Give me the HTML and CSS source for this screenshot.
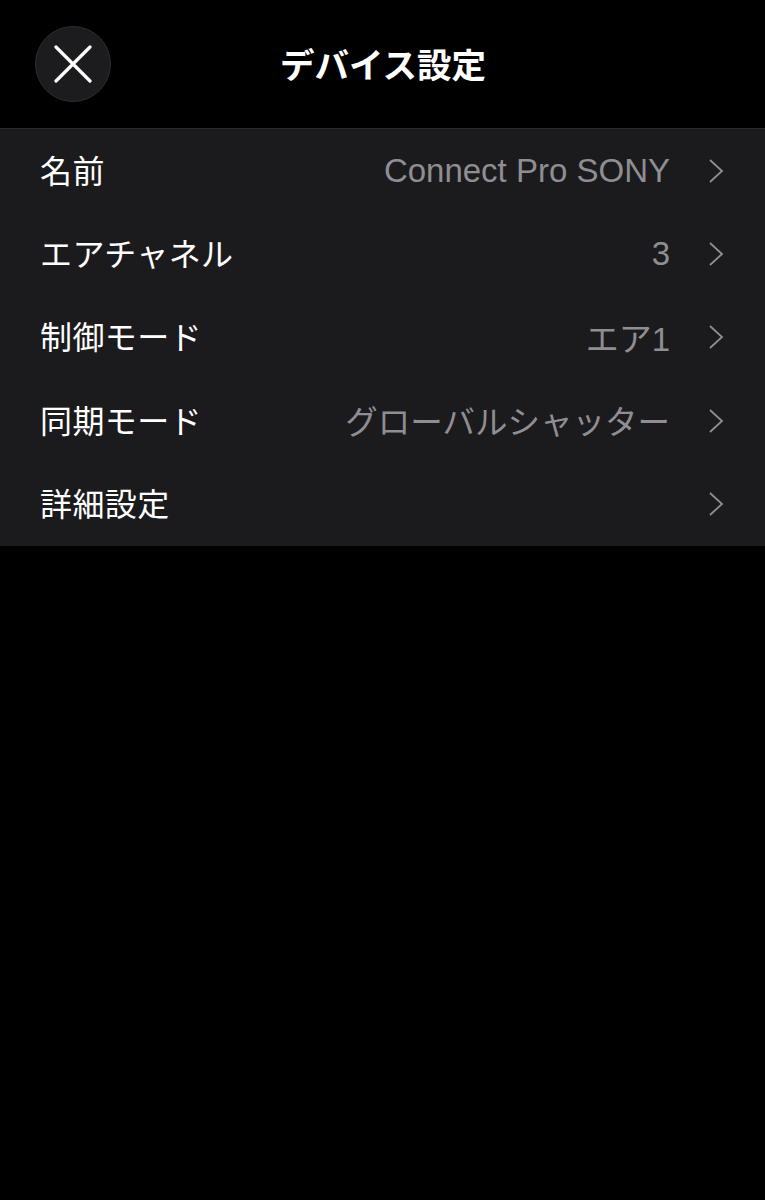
FILE: index.html
```html
<!DOCTYPE html>
<html lang="ja">
<head>
    <meta charset="UTF-8">
    <meta name="viewport" content="width=device-width, initial-scale=1.0">
    <title>デバイス設定</title>
    <link rel="stylesheet" href="styles.css">
</head>
<body>
    <div class="header">
        <button class="close">
            <svg width="38" height="38" viewBox="0 0 38 38">
                <path d="M2 2 L36 36 M36 2 L2 36" stroke="#fff" stroke-width="3.2" stroke-linecap="round" fill="none"/>
            </svg>
        </button>
        <h1 class="title">デバイス設定</h1>
    </div>

    <ul class="list">
        <li class="row">
            <span class="label">名前</span>
            <span class="value">Connect Pro SONY</span>
            <svg class="chev" width="16" height="26" viewBox="0 0 16 26"><path d="M2 2 L14 13 L2 24" stroke="#8e8e93" stroke-width="1.8" fill="none"/></svg>
        </li>
        <li class="row">
            <span class="label">エアチャネル</span>
            <span class="value">3</span>
            <svg class="chev" width="16" height="26" viewBox="0 0 16 26"><path d="M2 2 L14 13 L2 24" stroke="#8e8e93" stroke-width="1.8" fill="none"/></svg>
        </li>
        <li class="row">
            <span class="label">制御モード</span>
            <span class="value">エア1</span>
            <svg class="chev" width="16" height="26" viewBox="0 0 16 26"><path d="M2 2 L14 13 L2 24" stroke="#8e8e93" stroke-width="1.8" fill="none"/></svg>
        </li>
        <li class="row">
            <span class="label">同期モード</span>
            <span class="value jp">グローバルシャッター</span>
            <svg class="chev" width="16" height="26" viewBox="0 0 16 26"><path d="M2 2 L14 13 L2 24" stroke="#8e8e93" stroke-width="1.8" fill="none"/></svg>
        </li>
        <li class="row">
            <span class="label">詳細設定</span>
            <span class="value"></span>
            <svg class="chev" width="16" height="26" viewBox="0 0 16 26"><path d="M2 2 L14 13 L2 24" stroke="#8e8e93" stroke-width="1.8" fill="none"/></svg>
        </li>
    </ul>
</body>
</html>
```

FILE: styles.css
```css
body{
    margin: 0;
    background: #000;
    font-family: "Liberation Sans", "Noto Sans CJK JP", sans-serif;
    color: #fff;
}
.header{
    display: flex;
    align-items: center;
    height: 128px;
    padding-left: 35px;
}
.close{
    display: flex;
    justify-content: center;
    align-items: center;
    width: 76px;
    height: 76px;
    padding: 0;
    border: 1px solid #2e2e30;
    border-radius: 50%;
    background: #1c1c1e;
}
.title{
    margin: 0 0 2px 169px;
    font-family: "Noto Sans CJK JP", sans-serif;
    font-size: 34.5px;
    font-weight: 700;
}
.list{
    margin: 0;
    padding: 0;
    list-style: none;
    background: #1b1b1d;
    border-top: 1px solid #2a2a2c;
}
.row{
    display: flex;
    align-items: center;
    height: 83.4px;
    padding: 0 41px 0 40px;
}
.label{
    flex: 1;
    margin-bottom: 4px;
    font-family: "Noto Sans CJK JP", sans-serif;
    font-size: 32px;
    letter-spacing: 0.4px;
}
.value{
    color: #8e8e93;
    font-size: 33px;
    margin-right: 38px;
}
.value.jp{
    font-size: 32.5px;
    margin-bottom: 2px;
}
.chev{
    display: block;
}
```
